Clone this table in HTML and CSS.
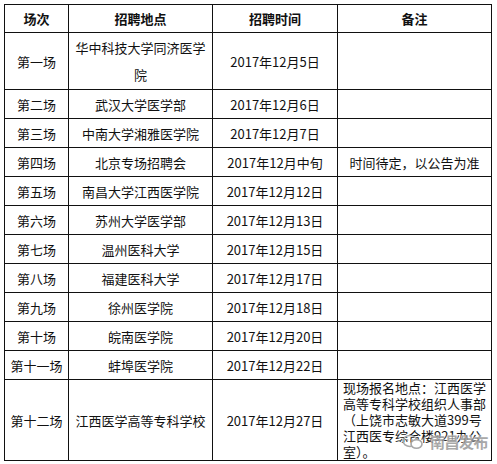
FILE: index.html
```html
<!DOCTYPE html>
<html lang="zh-CN">
<head>
<meta charset="utf-8">
<title>招聘安排</title>
<link rel="stylesheet" href="styles.css">
</head>
<body>
<div class="page">
  <div class="grid">
    <div class="c h">场次</div><div class="c h">招聘地点</div><div class="c h">招聘时间</div><div class="c h">备注</div>

    <div class="c">第一场</div><div class="c wrap">华中科技大学同济医学院</div><div class="c">2017年12月5日</div><div class="c"></div>
    <div class="c">第二场</div><div class="c">武汉大学医学部</div><div class="c">2017年12月6日</div><div class="c"></div>
    <div class="c">第三场</div><div class="c">中南大学湘雅医学院</div><div class="c">2017年12月7日</div><div class="c"></div>
    <div class="c">第四场</div><div class="c">北京专场招聘会</div><div class="c">2017年12月中旬</div><div class="c">时间待定，以公告为准</div>
    <div class="c">第五场</div><div class="c">南昌大学江西医学院</div><div class="c">2017年12月12日</div><div class="c"></div>
    <div class="c">第六场</div><div class="c">苏州大学医学部</div><div class="c">2017年12月13日</div><div class="c"></div>
    <div class="c">第七场</div><div class="c">温州医科大学</div><div class="c">2017年12月15日</div><div class="c"></div>
    <div class="c">第八场</div><div class="c">福建医科大学</div><div class="c">2017年12月17日</div><div class="c"></div>
    <div class="c">第九场</div><div class="c">徐州医学院</div><div class="c">2017年12月18日</div><div class="c"></div>
    <div class="c">第十场</div><div class="c">皖南医学院</div><div class="c">2017年12月20日</div><div class="c"></div>
    <div class="c">第十一场</div><div class="c">蚌埠医学院</div><div class="c">2017年12月22日</div><div class="c"></div>
    <div class="c">第十二场</div><div class="c">江西医学高等专科学校</div><div class="c">2017年12月27日</div><div class="c note">现场报名地点：江西医学<br>高等专科学校组织人事部<br>（上饶市志敏大道399号<br>江西医专综合楼921办公<br>室）。</div>
  </div>
  <div class="mark">
    <svg class="mark-icon" width="22" height="16" viewBox="0 0 22 16">
      <ellipse cx="8" cy="7" rx="7" ry="5.5" fill="none" stroke="#a8a8a8" stroke-width="1.6"/>
      <ellipse cx="14.5" cy="10" rx="5.5" ry="4.3" fill="#fff" stroke="#a8a8a8" stroke-width="1.6"/>
      <circle cx="5.5" cy="6" r="0.9" fill="#a8a8a8"/>
      <circle cx="10" cy="6" r="0.9" fill="#a8a8a8"/>
    </svg>
    <span class="mark-text">南昌发布</span>
  </div>
</div>
</body>
</html>
```

FILE: styles.css
```css
html, body {
  margin: 0;
  padding: 0;
  background: #fff;
}

.page {
  position: relative;
  width: 497px;
  height: 464px;
  padding: 4px 0 0 4px;
  box-sizing: border-box;
  font-family: "Noto Sans CJK SC", "Noto Sans", sans-serif;
  font-size: 13px;
  color: #111;
}

.grid {
  display: grid;
  grid-template-columns: 64px 144px 125px 154px;
  grid-template-rows: 28px 57px repeat(10, 29px) 81px;
  width: 488px;
  box-sizing: border-box;
  border-top: 1px solid #111;
  border-left: 1px solid #111;
}

.c {
  display: flex;
  align-items: center;
  justify-content: center;
  text-align: center;
  border-right: 1px solid #111;
  border-bottom: 1px solid #111;
  line-height: 27px;
  padding: 0 5px;
  white-space: nowrap;
}

.h {
  font-weight: bold;
}

.wrap {
  white-space: normal;
}

.note {
  justify-content: flex-start;
  text-align: left;
  line-height: 16px;
  padding: 0 0 0 5px;
}

.mark {
  position: absolute;
  left: 402px;
  top: 431px;
  display: flex;
  align-items: center;
  gap: 6px;
}

.mark-text {
  font-size: 15px;
  font-weight: bold;
  color: #9a9a9a;
  letter-spacing: -0.5px;
  text-shadow: 0 0 2px #fff, 0 0 2px #fff;
  opacity: 0.85;
}
```
